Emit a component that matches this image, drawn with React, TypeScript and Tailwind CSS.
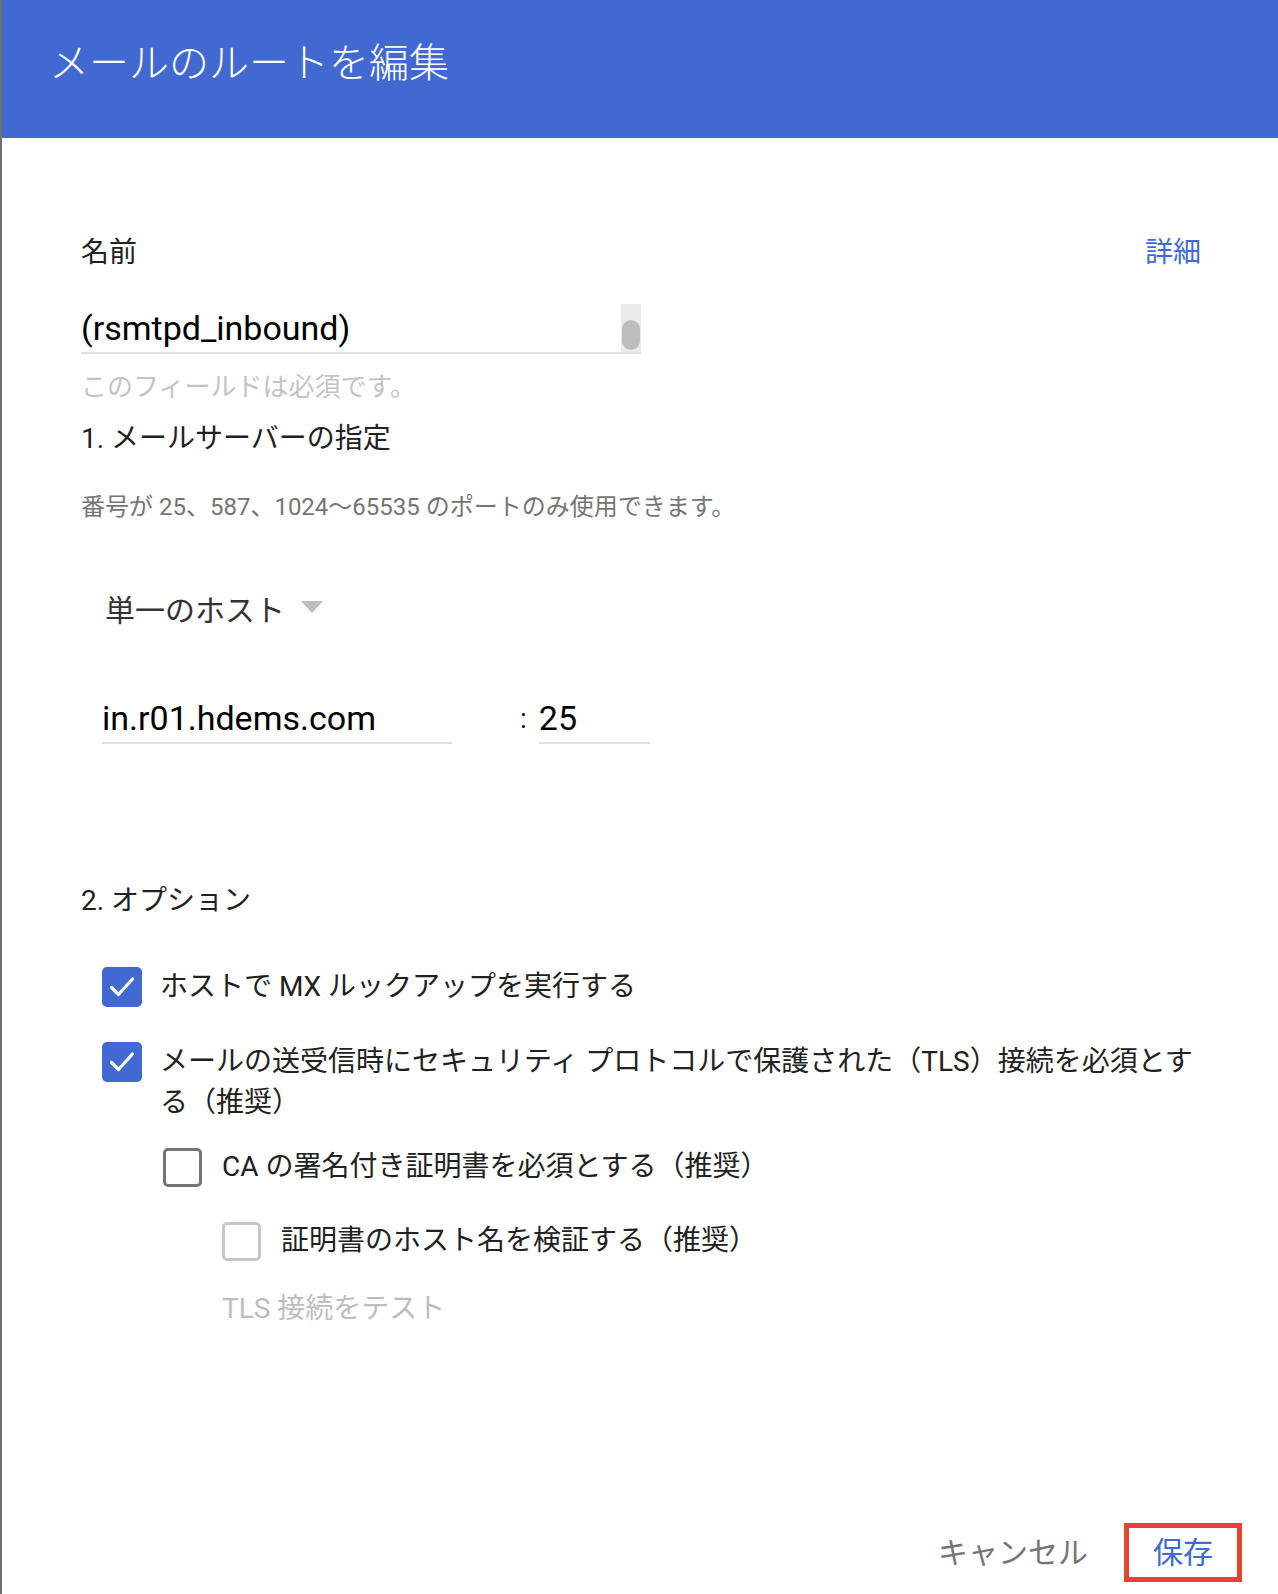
import React from "react";

const font = { fontFamily: 'Roboto, "Noto Sans CJK JP", sans-serif' };

function Checked() {
  return (
    <div className="flex h-[40px] w-[40px] shrink-0 items-center justify-center rounded-[5px] bg-[#4169d1]">
      <svg width="40" height="40" viewBox="0 0 40 40" fill="none">
        <path d="M9.5 20.5 L16.5 27.5 L30.5 12" stroke="white" strokeWidth="3.2" strokeLinecap="round" strokeLinejoin="round" />
      </svg>
    </div>
  );
}

export default function App() {
  return (
    <div className="min-h-[1594px] border-l-2 border-[#707070] bg-white text-[#212121]" style={font}>
      <header className="h-[138px] bg-[#4169d1] pl-[47px] pt-[40px]">
        <h1 className="text-[40px] leading-[48px] font-light text-white">メールのルートを編集</h1>
      </header>

      <main className="pl-[79px] pr-[77px]">
        <div className="mt-[98px] flex items-center justify-between text-[28px] leading-[34px]">
          <span>名前</span>
          <a className="text-[#4169d1]">詳細</a>
        </div>

        <div className="mt-[34px] flex h-[50px] w-[560px] items-center justify-between border-b-2 border-[#e0e0e0]">
          <span className="text-[34px] leading-[48px] text-black">(rsmtpd_inbound)</span>
          <div className="flex h-[48px] w-[20px] items-end justify-center bg-[#ebebeb] pb-[2px]">
            <div className="h-[30px] w-[18px] rounded-full bg-[#bdbdbd]" />
          </div>
        </div>

        <p className="mt-[17px] text-[26px] leading-[32px] text-[#c4c4c4]">このフィールドは必須です。</p>

        <h2 className="mt-[18px] text-[28px] leading-[36px]">1. メールサーバーの指定</h2>

        <p className="mt-[34px] text-[24px] leading-[32px] text-[#757575]">
          番号が 25、587、1024〜65535 のポートのみ使用できます。
        </p>

        <div className="mt-[68px] ml-[24px] flex items-center gap-[16px]">
          <span className="text-[30px] leading-[40px] text-[#333]">単一のホスト</span>
          <svg width="22" height="12" viewBox="0 0 22 12" className="-mt-[8px]">
            <path d="M0 0 H22 L11 12 Z" fill="#bdbdbd" />
          </svg>
        </div>

        <div className="mt-[63px] ml-[21px] flex items-end">
          <div className="flex h-[50px] w-[350px] items-center border-b-2 border-[#e0e0e0]">
            <span className="text-[34px] leading-[48px] text-black">in.r01.hdems.com</span>
          </div>
          <span className="ml-[68px] mb-[2px] text-[28px] leading-[46px] text-black">:</span>
          <div className="ml-[12px] flex h-[50px] w-[111px] items-center border-b-2 border-[#e0e0e0]">
            <span className="text-[34px] leading-[48px] text-black">25</span>
          </div>
        </div>

        <h2 className="mt-[139px] text-[28px] leading-[36px]">2. オプション</h2>

        <div className="mt-[48px] ml-[21px] flex items-center gap-[18px]">
          <Checked />
          <span className="text-[28px] leading-[40px]">ホストで MX ルックアップを実行する</span>
        </div>

        <div className="mt-[35px] ml-[21px] flex items-start gap-[18px]">
          <Checked />
          <span className="-mt-[1px] text-[28px] leading-[41px]">
            メールの送受信時にセキュリティ プロトコルで保護された（TLS）接続を必須とす
            <br />
            る（推奨）
          </span>
        </div>

        <div className="mt-[24px] ml-[82px] flex items-center gap-[20px]">
          <div className="h-[39px] w-[39px] shrink-0 rounded-[5px] border-[3px] border-[#757575]" />
          <span className="text-[28px] leading-[40px]">CA の署名付き証明書を必須とする（推奨）</span>
        </div>

        <div className="mt-[34px] ml-[141px] flex items-center gap-[20px]">
          <div className="h-[39px] w-[39px] shrink-0 rounded-[5px] border-[3px] border-[#c8c8c8]" />
          <span className="text-[28px] leading-[40px]">証明書のホスト名を検証する（推奨）</span>
        </div>

        <p className="mt-[30px] ml-[141px] text-[28px] leading-[36px] text-[#bdbdbd]">TLS 接続をテスト</p>
      </main>

      <footer className="mt-[196px] flex items-center justify-end pr-[36px]">
        <button className="mr-[36px] text-[30px] leading-[40px] text-[#757575]">キャンセル</button>
        <button className="flex h-[59px] w-[118px] items-center justify-center border-[5px] border-[#e8432c] text-[30px] text-[#4169d1]">
          保存
        </button>
      </footer>
    </div>
  );
}
